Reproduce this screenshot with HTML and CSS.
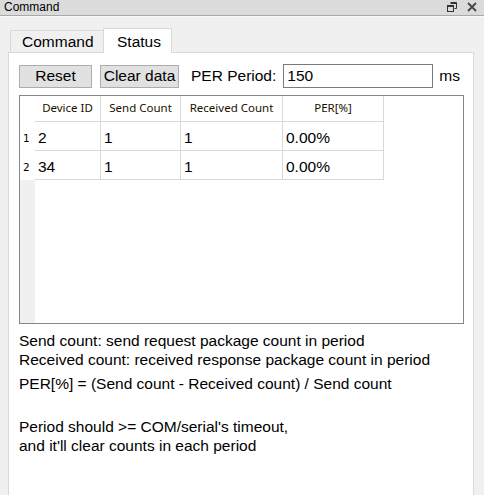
FILE: index.html
```html
<!DOCTYPE html>
<html>
<head>
<meta charset="utf-8">
<link rel="stylesheet" href="styles.css">
</head>
<body>
<div class="dock">
  <div class="titlebar">
    <span class="title">Command</span>
    <span class="tbtns">
      <svg class="ico" width="10" height="10" viewBox="0 0 10 10"><path d="M3.5 0.5h6v6h-2" fill="none" stroke="#333" stroke-width="1"/><path d="M3.5 1.5h6" stroke="#333" stroke-width="1"/><rect x="0.5" y="3.5" width="6" height="6" fill="none" stroke="#333" stroke-width="1"/><path d="M0.5 4.5h6" stroke="#333" stroke-width="1"/></svg>
      <svg class="ico" width="10" height="10" viewBox="0 0 10 10"><path d="M1 1L9 9M9 1L1 9" stroke="#444" stroke-width="1.8"/></svg>
    </span>
  </div>
  <div class="body">
    <div class="tabs">
      <div class="tab">Command</div>
      <div class="tab active">Status</div>
    </div>
    <div class="panel">
      <div class="toolbar">
        <button class="btn reset">Reset</button>
        <button class="btn clear">Clear data</button>
        <span class="lbl">PER Period:</span>
        <div class="input">150</div>
        <span class="unit">ms</span>
      </div>
      <div class="table">
        <div class="vhead">
          <div class="corner"></div>
          <div class="rn">1</div>
          <div class="rn">2</div>
        </div>
        <div class="grid">
          <div class="hrow">
            <div class="hc c1">Device ID</div>
            <div class="hc c2">Send Count</div>
            <div class="hc c3">Received Count</div>
            <div class="hc c4">PER[%]</div>
          </div>
          <div class="row">
            <div class="cell c1">2</div>
            <div class="cell c2">1</div>
            <div class="cell c3">1</div>
            <div class="cell c4">0.00%</div>
          </div>
          <div class="row">
            <div class="cell c1">34</div>
            <div class="cell c2">1</div>
            <div class="cell c3">1</div>
            <div class="cell c4">0.00%</div>
          </div>
        </div>
      </div>
      <div class="notes">
        <p class="n1">Send count: send request package count in period<br>Received count: received response package count in period</p>
        <p class="n2">PER[%] = (Send count - Received count) / Send count</p>
        <p class="n3">Period should &gt;= COM/serial's timeout,<br>and it'll clear counts in each period</p>
      </div>
    </div>
  </div>
</div>
</body>
</html>
```
FILE: styles.css
```css
* { box-sizing: border-box; }
html, body { margin: 0; padding: 0; }
body {
  width: 484px;
  height: 495px;
  overflow: hidden;
  background: #f0f0f0;
  font-family: "Liberation Sans", Arial, sans-serif;
  color: #000;
}
.dock { display: flex; flex-direction: column; height: 495px; }
.titlebar {
  height: 16px;
  background: #dbdbdb;
  border-bottom: 1px solid #a9a9a9;
  display: flex;
  align-items: center;
  justify-content: space-between;
  padding: 0 7px 1px 4px;
}
.title { font-size: 12px; line-height: 14px; color: #000; }
.tbtns { display: flex; gap: 10px; align-items: center; }
.ico { display: block; }
.body {
  flex: 1;
  background: #f0f0f0;
  border-top: 1px solid #fafafa;
  padding: 10px 10px 0 8px;
  display: flex;
  flex-direction: column;
}
.tabs { display: flex; padding-left: 2px; height: 25px; align-items: flex-end; }
.tab {
  font-size: 15.5px;
  height: 22px;
  line-height: 22px;
  padding: 0 10px 0 11px;
  width: 93px;
  background: #f0f0f0;
  border: 1px solid #d9d9d9;
  border-bottom: none;
  border-right: none;
}
.tab.active {
  width: 69px;
  height: 25px;
  line-height: 25px;
  background: #fff;
  border-right: 1px solid #d9d9d9;
  padding-left: 13px;
  margin-bottom: -1px;
  position: relative;
  z-index: 1;
}
.panel {
  flex: 1;
  background: #fff;
  border: 1px solid #d9d9d9;
  border-bottom: none;
  padding: 11px 10px 0 10px;
}
.toolbar { display: flex; align-items: center; height: 24px; }
.btn {
  font-family: "Liberation Sans", Arial, sans-serif;
  font-size: 15.5px;
  height: 23px;
  background: #e1e1e1;
  border: 1px solid #adadad;
  color: #000;
  padding: 0;
  margin: 0;
}
.reset { width: 73px; }
.clear { width: 79px; margin-left: 8px; }
.lbl { font-size: 15.5px; margin-left: 12px; }
.input {
  margin-left: 7px;
  width: 150px;
  height: 24px;
  border: 1px solid #7a7a7a;
  font-size: 15.5px;
  line-height: 22px;
  padding-left: 3px;
}
.unit { font-size: 15.5px; margin-left: 6px; }
.table {
  margin-top: 7px;
  width: 445px;
  height: 229px;
  border: 1px solid #828790;
  display: flex;
}
.vhead { width: 15px; background: #f0f0f0; display: flex; flex-direction: column; }
.corner { height: 25px; background: #fff; }
.rn {
  height: 29px;
  font-family: "DejaVu Sans", sans-serif;
  font-size: 10.5px;
  display: flex;
  align-items: center;
  padding-left: 3px;
  padding-top: 4px;
  background: #fff;
}
.rn + .rn { height: 30px; }
.grid { display: flex; flex-direction: column; }
.hrow, .row { display: flex; }
.hrow { height: 25px; }
.row { height: 29px; border-top: 1px solid #d8d8d8; }
.row + .row { height: 30px; border-bottom: 1px solid #d8d8d8; }
.c1 { width: 66px; }
.c2 { width: 80px; }
.c3 { width: 102px; }
.c4 { width: 101px; }
.hc {
  font-family: "Noto Sans", "DejaVu Sans", sans-serif;
  font-size: 11.5px;
  text-align: center;
  line-height: 24px;
  border-right: 1px solid #d8d8d8;
  color: #1a1000;
}
.cell {
  font-size: 15.5px;
  border-right: 1px solid #d8d8d8;
  padding-left: 3px;
  display: flex;
  align-items: center;
  padding-top: 4px;
}
.notes { margin-top: 7px; font-size: 15.5px; }
.notes p { margin: 0; line-height: 19px; }
.n2 { margin-top: 5px !important; }
.n3 { margin-top: 24px !important; }
```
